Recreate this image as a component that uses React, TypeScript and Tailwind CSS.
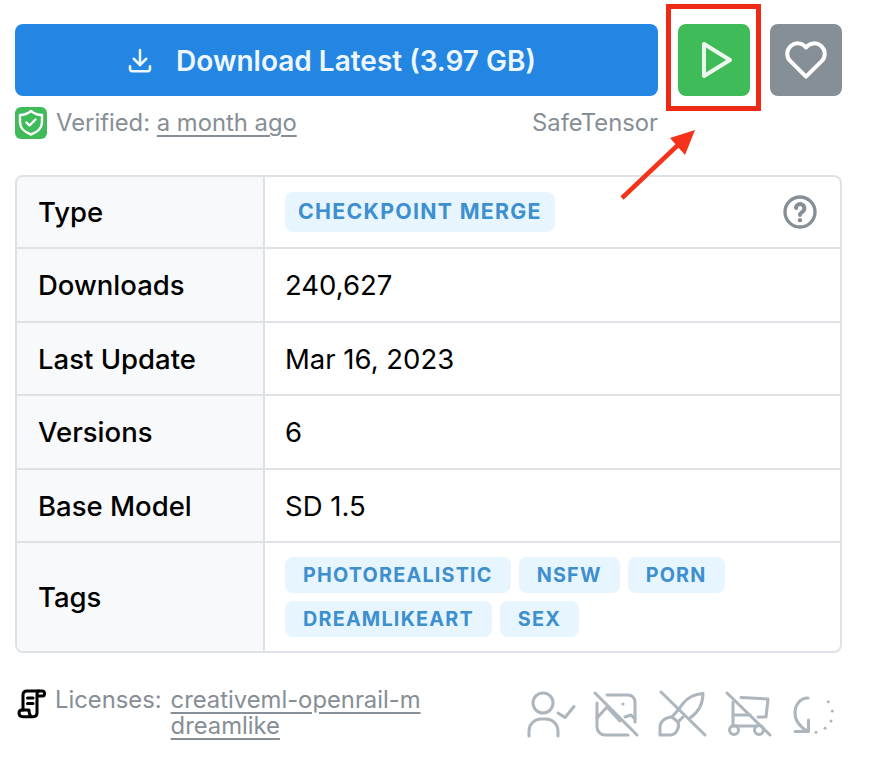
import { TbDownload, TbPlayerPlay, TbHeart } from 'react-icons/tb';

const rows = [
  { label: 'Downloads', value: '240,627' },
  { label: 'Last Update', value: 'Mar 16, 2023' },
  { label: 'Versions', value: '6' },
  { label: 'Base Model', value: 'SD 1.5' },
];

const tags = ['PHOTOREALISTIC', 'NSFW', 'PORN', 'DREAMLIKEART', 'SEX'];

function Badge({ text }: { text: string }) {
  return (
    <span className="flex h-[36px] items-center rounded-[8px] bg-[#e7f5ff] px-[18px] pt-[2px] text-[19.8px] font-bold tracking-[1.2px] text-[#3d8fcd]">
      {text}
    </span>
  );
}

function ShieldIcon() {
  return (
    <svg width="32" height="32" viewBox="0 0 32 32" fill="none" stroke="white" strokeWidth="2.4" strokeLinecap="round" strokeLinejoin="round">
      <path d="M16 4C19 6.5 22.5 8 27 8V15C27 21 22 25.5 16 27.5C10 25.5 5 21 5 15V8C9.5 8 13 6.5 16 4Z" />
      <path d="M11.5 15.5l3 3l6-6" />
    </svg>
  );
}

function ScrollIcon() {
  return (
    <svg className="ml-[1px] mr-[9px] mt-[2px] shrink-0" width="30" height="30" viewBox="6 4 30 30" fill="none" stroke="black" strokeWidth="3" strokeLinecap="round" strokeLinejoin="round">
      <path d="M34.5 8.5C34.5 7 33.5 6 32 6H17C14.5 6 13 7.5 13 10V25" />
      <path d="M29 6C27.5 6 27 8 27 10V28C27 30.5 25.500 31.7 23 31.7H13C10 31.7 9 30 9 28C9 26 10.5 25 12 25H19C19 27 19.5 30 21 31.5" />
      <path d="M28 11H33C34 11 34.5 10 34.5 8.5" />
      <path d="M17.500 13H23" />
      <path d="M17.500 18.500H23" />
    </svg>
  );
}

function HelpIcon() {
  return (
    <svg width="40" height="40" viewBox="0 0 24 24" fill="none" stroke="#868e96" strokeWidth="2" strokeLinecap="round" strokeLinejoin="round">
      <circle cx="12" cy="12" r="9" />
      <path d="M9.6 9.6a2.5 2.5 0 1 1 3.8 2.3c-.9.6-1.4 1-1.4 1.9" strokeWidth="2.4" />
      <path d="M12 16.9v.01" strokeWidth="2.6" />
    </svg>
  );
}

const permProps = {
  width: 56,
  height: 56,
  viewBox: '0 0 56 56',
  fill: 'none',
  stroke: '#adb5bd',
  strokeWidth: 3,
  strokeLinecap: 'round' as const,
  strokeLinejoin: 'round' as const,
};

function UserCheckIcon() {
  return (
    <svg {...permProps}>
      <circle cx="19" cy="18" r="10" />
      <path d="M5 51v-5a12 12 0 0 1 12-12h5a12 12 0 0 1 12 12v5" />
      <path d="M34 28l7 4.5l9-11" />
    </svg>
  );
}

function PhotoOffIcon() {
  return (
    <svg {...permProps}>
      <path d="M5 8L47 50" />
      <path d="M17 10H38a7 7 0 0 1 7 7V37" />
      <path d="M7 18V42a8 8 0 0 0 8 8H38" />
      <path d="M7 33L17 22L30 36" />
      <path d="M35 32L41 30L45 34" />
      <path d="M33 19v.01" />
    </svg>
  );
}

function BrushOffIcon() {
  return (
    <svg {...permProps}>
      <path d="M5 7L49 50" />
      <path d="M22 25L27 18.500C32 12 40 9 47 8.500C47 16 44 26 34 33" />
      <path d="M4 50H14C20 50 24 43 22 37L16 32C9 32 4 37 4 42Z" />
      <path d="M22 25L16 32" />
      <path d="M22 37L27 32" />
    </svg>
  );
}

function CartOffIcon() {
  return (
    <svg {...permProps}>
      <path d="M5 8L48 50" />
      <path d="M19 12.500L46 14L44 32H36" />
      <path d="M11 17V41" />
      <path d="M11 30H28" />
      <path d="M11 41H35" />
      <circle cx="12" cy="45" r="4.500" />
      <circle cx="37" cy="45" r="4.500" />
    </svg>
  );
}

function RotateIcon() {
  return (
    <svg {...permProps}>
      <path d="M20 13C12 13 7 20 7 28C7 35 12 42 20 46.500" />
      <path d="M7 46.500H20.500V35" />
      <path d="M40.300 16.700v.01" />
      <path d="M44.300 26v.01" />
      <path d="M43 36v.01" />
      <path d="M37 43.300v.01" />
      <path d="M28 47.300v.01" />
    </svg>
  );
}

export default function App() {
  return (
    <div className="relative h-[758px] w-[874px] bg-white pl-[15px] pr-[32px] pt-[24px] font-['Inter',sans-serif]">
      {/* Buttons */}
      <div className="flex gap-[20px]">
        <button className="flex h-[72px] flex-1 items-center justify-center gap-[21px] rounded-[8px] bg-[#2486e3] pr-[12px] text-[28px] font-semibold text-[#eef7ff]">
          <TbDownload size={30} strokeWidth={2} />
          <span className="pt-[2px]">Download Latest (3.97 GB)</span>
        </button>
        <button className="flex h-[72px] w-[72px] items-center justify-center rounded-[8px] bg-[#40bb59] text-[#eef7ee]">
          <TbPlayerPlay size={48} strokeWidth={2} />
        </button>
        <button className="flex h-[72px] w-[72px] items-center justify-center rounded-[8px] bg-[#868e96] text-white">
          <TbHeart size={50} strokeWidth={1.9} />
        </button>
      </div>

      {/* Verified row */}
      <div className="mr-[184px] mt-[11px] flex h-[32px] items-center text-[23.800px] text-[#868e96]">
        <span className="mr-[9px] flex h-[32px] w-[32px] items-center justify-center rounded-[6px] bg-[#40bb59]">
          <ShieldIcon />
        </span>
        <span>Verified:&nbsp;</span>
        <span className="underline underline-offset-[4px]">a month ago</span>
        <span className="ml-auto">SafeTensor</span>
      </div>

      {/* Details table */}
      <div className="mt-[36px] overflow-hidden rounded-[8px] border-2 border-[#dee2e6] text-[27.500px] text-black">
        <div className="flex h-[72px] border-b-2 border-[#dee2e6]">
          <div className="flex w-[248px] items-center border-r-2 border-[#dee2e6] bg-[#f8f9fa] pl-[21px] pt-[2px] font-[450]">Type</div>
          <div className="flex flex-1 items-center justify-between pl-[20px] pr-[20px]">
            <span className="flex h-[40px] items-center rounded-[8px] bg-[#e7f5ff] px-[13px] text-[21.300px] font-bold tracking-[1.3px] text-[#3d8fcd]">
              CHECKPOINT MERGE
            </span>
            <HelpIcon />
          </div>
        </div>
        {rows.map(r => (
          <div key={r.label} className="flex h-[73.500px] border-b-2 border-[#dee2e6]">
            <div className="flex w-[248px] items-center border-r-2 border-[#dee2e6] bg-[#f8f9fa] pl-[21px] pt-[2px] font-[450]">{r.label}</div>
            <div className="flex flex-1 items-center pl-[20px] pt-[2px]">{r.value}</div>
          </div>
        ))}
        <div className="flex h-[108px]">
          <div className="flex w-[248px] items-center border-r-2 border-[#dee2e6] bg-[#f8f9fa] pl-[21px] pt-[2px] font-[450]">Tags</div>
          <div className="flex flex-1 flex-wrap content-center gap-x-[8px] gap-y-[8px] pl-[20px] pr-[100px]">
            {tags.map(t => (
              <Badge key={t} text={t} />
            ))}
          </div>
        </div>
      </div>

      {/* Licenses and permissions */}
      <div className="-mr-[2px] mt-[32px] flex items-start justify-between">
        <div className="flex pt-[2px] text-[23.800px] leading-[26px] text-[#868e96]">
          <ScrollIcon />
          <span className="mr-[9px]">Licenses:</span>
          <span className="flex flex-col items-start">
            <span className="underline underline-offset-[4px]">creativeml-openrail-m</span>
            <span className="underline underline-offset-[4px]">dreamlike</span>
          </span>
        </div>
        <div className="flex gap-[10px]">
          <UserCheckIcon />
          <PhotoOffIcon />
          <BrushOffIcon />
          <CartOffIcon />
          <RotateIcon />
        </div>
      </div>

      {/* Annotation over the play button */}
      <div className="absolute left-[666px] top-[4px] h-[107px] w-[95px] border-[5px] border-[#ee2a16]" />
      <svg className="absolute left-[610px] top-[120px]" width="100" height="90" viewBox="0 0 100 90" fill="none">
        <path d="M12 78 L68 25" stroke="#f4331a" strokeWidth="4.500" />
        <path d="M85 10 L60 18 L75 35 Z" fill="#f4331a" />
      </svg>
    </div>
  );
}
